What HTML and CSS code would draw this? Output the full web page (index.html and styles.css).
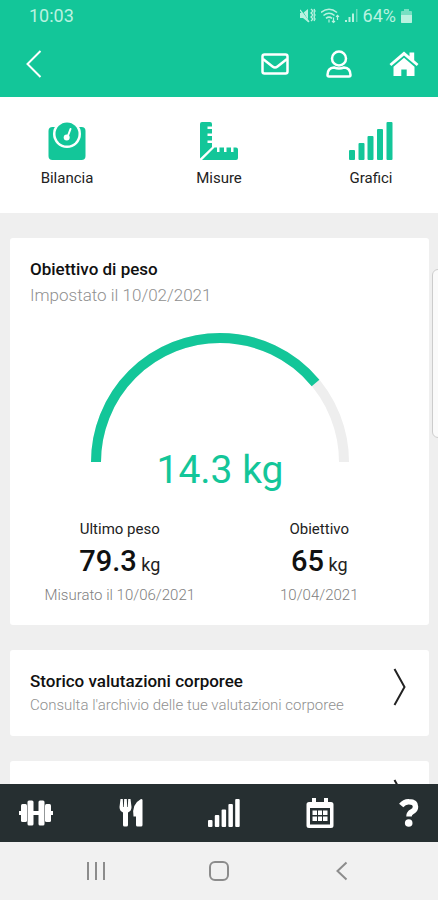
FILE: index.html
```
<!DOCTYPE html>
<html lang="it">
  <head>
    <meta charset="UTF-8" />
    <meta name="viewport" content="width=device-width, initial-scale=1.0" />
    <title>Obiettivo di peso</title>
    <link rel="stylesheet" href="styles.css">
  </head>
  <body>
    <header class="top">
      <div class="status-bar">
        <span class="clock">10:03</span>
        <div class="status-icons">
          <svg width="16" height="16" viewBox="0 0 16 16" fill="currentColor">
            <path d="M0 5h3l5-4v13l-5-4H0z" />
            <path d="M1 1l8 13" stroke="#13c699" stroke-width="1" />
            <path d="M0 2l9 12M11 1l2 2-2 2 2 2-2 2 2 2-2 2M14 1l1 2-1 2 1 2-1 2 1 2-1 2" fill="none" stroke="currentColor" stroke-width="1.3" />
          </svg>
          <svg width="19" height="16" viewBox="0 0 19 16" fill="none" stroke="currentColor" stroke-width="1.6">
            <path d="M0 4.500q8-6.500 16 0M2.500 7.500q5.500-4.500 11 0M5 10.300q3-2.400 6 0" />
            <path d="M8 11.500v3M12.500 9.500v5M11 13l1.500 1.500L14 13M16.500 12V7M15 8.800l1.500-1.500L18 8.800" stroke-width="1.2" />
          </svg>
          <svg width="13" height="16" viewBox="0 0 13 16" fill="currentColor">
            <path d="M0 12h2v2H0zM3.500 9h2v5h-2zM7 5.500h2V14H7z" />
            <path d="M11 1h1.500v13H11z" opacity=".5" />
          </svg>
          <span class="battery">64%</span>
          <svg width="11" height="16" viewBox="0 0 11 16" fill="currentColor">
            <path d="M3 1h5v2h2q1 0 1 1v10q0 1-1 1H1q-1 0-1-1V4q0-1 1-1h2z" opacity=".6" />
            <path d="M0 7h11v7q0 1-1 1H1q-1 0-1-1z" />
          </svg>
        </div>
      </div>
      <div class="toolbar">
        <button class="icon-btn back" aria-label="Indietro">
          <svg width="16" height="28" viewBox="0 0 16 28" fill="none" stroke="currentColor" stroke-width="2">
            <path d="M14.500 1L1.500 14l13 13" />
          </svg>
        </button>
        <button class="icon-btn" aria-label="Messaggi">
          <svg width="28" height="22" viewBox="0 0 28 22" fill="none" stroke="currentColor" stroke-width="2.5" stroke-linejoin="round">
            <rect x="1.5" y="1.5" width="25" height="19" rx="2" />
            <path d="M2 6l9.500 7.500q2.500 2 5 0L26 6" />
          </svg>
        </button>
        <button class="icon-btn" aria-label="Profilo">
          <svg width="26" height="28" viewBox="0 0 26 28" fill="none" stroke="currentColor" stroke-width="2.5" stroke-linejoin="round">
            <circle cx="13" cy="8.500" r="7" />
            <path d="M8 17.500q5 2 10 0 6.500.5 6.500 7.500 0 1.500-1.500 1.500H3q-1.500 0-1.500-1.500 0-7 6.500-7.500z" />
          </svg>
        </button>
        <button class="icon-btn" aria-label="Home">
          <svg width="30" height="26" viewBox="0 0 30 26" fill="currentColor">
            <path d="M15 6.800l10.500 9V25h-7.800v-6.500h-5.400V25H4.500v-9.200z" />
            <path d="M15 .5l5.500 4.700V1.500h4.700v7.800l4.300 3.600-1.800 2.200L15 4.400 2.300 15.100.5 12.900z" />
          </svg>
        </button>
      </div>
    </header>

    <nav class="tabs">
      <a class="tab" href="#bilancia">
        <svg width="38" height="38" viewBox="0 0 38 38" fill="currentColor">
          <rect x="0.5" y="5" width="37" height="33" rx="4" />
          <circle cx="19" cy="12" r="14" fill="#fff" />
          <circle cx="19" cy="12" r="11.500" />
          <path d="M22.500 7l-3 8" fill="none" stroke="#fff" stroke-width="2" stroke-linecap="round" />
          <circle cx="18.700" cy="15.500" r="3" fill="#fff" />
        </svg>
        <span>Bilancia</span>
      </a>
      <a class="tab" href="#misure">
        <svg width="38" height="38" viewBox="0 0 38 38" fill="currentColor">
          <path d="M2 0h8q2 0 2 2v2.500H7.500V7H12v4.500H7.500V14H12v4.500H7.500V21H12v4L0 36.500V2q0-2 2-2z" />
          <path d="M2 38l12.500-12.500H17V30h2.500v-4.500H24V30h2.500v-4.500H31V30h2.500v-4.500H36q2 0 2 2V36q0 2-2 2z" />
        </svg>
        <span>Misure</span>
      </a>
      <a class="tab" href="#grafici">
        <svg width="44" height="38" viewBox="0 0 44 38" fill="currentColor">
          <rect x="0" y="28" width="6" height="10" rx="1" />
          <rect x="9.500" y="21" width="6" height="17" rx="1" />
          <rect x="18.500" y="14" width="6" height="24" rx="1" />
          <rect x="28" y="7" width="6" height="31" rx="1" />
          <rect x="37.500" y="0" width="6" height="38" rx="1" />
        </svg>
        <span>Grafici</span>
      </a>
    </nav>

    <main class="content">
      <section class="card goal">
        <div class="goal-head">
          <h2>Obiettivo di peso</h2>
          <p class="goal-date">Impostato il 10/02/2021</p>
        </div>
        <svg class="gauge" viewBox="0 0 258 164">
          <path class="gauge-track" d="M5 129a124 124 0 0 1 248 0" />
          <path class="gauge-value" pathLength="100" stroke-dasharray="78 100" d="M5 129a124 124 0 0 1 248 0" />
          <text class="gauge-text" x="129" y="150">14.3 kg</text>
        </svg>
        <div class="weights">
          <div class="weight">
            <span class="weight-label">Ultimo peso</span>
            <span class="weight-value"><strong>79.3</strong> kg</span>
            <span class="weight-date">Misurato il 10/06/2021</span>
          </div>
          <div class="weight">
            <span class="weight-label">Obiettivo</span>
            <span class="weight-value"><strong>65</strong> kg</span>
            <span class="weight-date">10/04/2021</span>
          </div>
        </div>
      </section>

      <a class="card link-card" href="#storico">
        <div>
          <h2>Storico valutazioni corporee</h2>
          <p class="link-text">Consulta l'archivio delle tue valutazioni corporee</p>
        </div>
        <svg width="13" height="38" viewBox="0 0 13 38" fill="none" stroke="currentColor" stroke-width="2">
          <path d="M1.500 1l10 18-10 18" />
        </svg>
      </a>

      <a class="card link-card" href="#altro" aria-label="Altro">
        <div></div>
        <svg width="13" height="38" viewBox="0 0 13 38" fill="none" stroke="currentColor" stroke-width="2">
          <path d="M1.500 1l10 18-10 18" />
        </svg>
      </a>
    </main>

    <nav class="bottom-nav">
      <a href="#allenamento" aria-label="Allenamento">
        <svg width="34" height="28" viewBox="0 0 34 28" fill="currentColor">
          <path d="M14 12h6v4h-6zM0 12h2.500v4H0zM31.500 12H34v4h-2.500z" />
          <rect x="2" y="5" width="6" height="18" rx="1.5" />
          <rect x="8.500" y="1.500" width="6" height="25" rx="1.5" />
          <rect x="19.500" y="1.500" width="6" height="25" rx="1.5" />
          <rect x="26" y="5" width="6" height="18" rx="1.5" />
        </svg>
      </a>
      <a href="#dieta" aria-label="Dieta">
        <svg width="24" height="28" viewBox="0 0 24 28" fill="currentColor">
          <path d="M1.500 0h2.300l.4 8h.6l.4-8h2.600l.4 8h.6l.4-8h2.300l1 8q0 4-3.500 5.500V26q0 1.500-1.500 1.500H5.500Q4 27.500 4 26V13.500Q.5 12 .5 8z" />
          <path d="M23.500 1v25q0 1.500-1.500 1.500h-3.500Q17 27.500 17 26v-8.500h-2.500Q12.500 5 22 0q1.500 0 1.500 1z" />
        </svg>
      </a>
      <a href="#grafici" aria-label="Grafici">
        <svg width="32" height="28" viewBox="0 0 32 28" fill="currentColor">
          <rect x="0" y="21" width="4.500" height="7" rx="1" />
          <rect x="6.800" y="16" width="4.500" height="12" rx="1" />
          <rect x="13.600" y="10.500" width="4.500" height="17.500" rx="1" />
          <rect x="20.400" y="5" width="4.500" height="23" rx="1" />
          <rect x="27.200" y="0" width="4.500" height="28" rx="1" />
        </svg>
      </a>
      <a href="#calendario" aria-label="Calendario">
        <svg width="28" height="30" viewBox="0 0 28 30" fill="currentColor">
          <path fill-rule="evenodd" d="M6 0h4v4h8V0h4v4h3q2.500 0 2.500 2.500v21Q27.500 30 25 30H3Q.5 30 .5 27.500v-21Q.5 4 3 4h3zM4 10v16.500h20V10z" />
          <path d="M6.500 12.500h4.500v4.500H6.500zM12 12.500h4v4.500h-4zM17 12.500h4.500v4.500H17zM6.500 18.500h4.500V23H6.500zM12 18.500h4V23h-4zM17 18.500h4.500V23H17z" />
        </svg>
      </a>
      <a href="#aiuto" aria-label="Aiuto">
        <svg width="20" height="28" viewBox="0 0 20 28" fill="none" stroke="currentColor">
          <path d="M2.200 6.500Q5.500 2.500 10 2.800q6.500.2 6.500 4.900 0 3.300-3.500 5.100-3 1.500-3 4.700" stroke-width="5.5" />
          <circle cx="9.700" cy="24" r="3.800" fill="currentColor" stroke="none" />
        </svg>
      </a>
    </nav>

    <footer class="system-nav">
      <button class="icon-btn" aria-label="App recenti">
        <svg width="20" height="20" viewBox="0 0 20 20" fill="none" stroke="currentColor" stroke-width="2">
          <path d="M2 1v18M10 1v18M18 1v18" />
        </svg>
      </button>
      <button class="icon-btn" aria-label="Schermata Home">
        <svg width="20" height="20" viewBox="0 0 20 20" fill="none" stroke="currentColor" stroke-width="2">
          <rect x="1" y="1" width="18" height="18" rx="5" />
        </svg>
      </button>
      <button class="icon-btn" aria-label="Torna indietro">
        <svg width="20" height="20" viewBox="0 0 20 20" fill="none" stroke="currentColor" stroke-width="2">
          <path d="M14.500 1.500L5.500 10l9 8.500" />
        </svg>
      </button>
    </footer>

    <!-- edge panel handle -->
    <div class="edge-handle"></div>
  </body>
</html>
```
FILE: styles.css
```
* {
  box-sizing: border-box;
}
body {
  font-family: Roboto, sans-serif;
  background-color: #efefef;
  color: #222222;
  margin: 0;
  display: flex;
  flex-direction: column;
  height: 100vh;
  overflow: hidden;
}
svg {
  display: block;
  flex-shrink: 0;
}
h2,
p {
  margin: 0;
}
h2 {
  font-size: 17px;
  line-height: 24px;
  font-weight: 500;
  color: #111111;
}
a {
  color: inherit;
  text-decoration: none;
}
.icon-btn {
  background: none;
  border: none;
  padding: 0;
  color: inherit;
  cursor: pointer;
}

/* header */
.top {
  background: #13c699;
  color: #ffffff;
}
.status-bar {
  display: flex;
  justify-content: space-between;
  align-items: center;
  height: 31px;
  padding: 0 26px 0 29px;
  font-size: 18px;
  color: #b9f2e0;
}
.status-icons {
  display: flex;
  align-items: center;
  gap: 5px;
}
.toolbar {
  display: flex;
  align-items: center;
  gap: 37px;
  height: 66px;
  padding: 0 19px 0 26px;
}
.back {
  margin-right: auto;
}

/* tabs */
.tabs {
  display: flex;
  justify-content: space-between;
  background: #ffffff;
  padding: 25px 31px 23px;
}
.tab {
  display: flex;
  flex-direction: column;
  align-items: center;
  gap: 6px;
  width: 72px;
  font-size: 15px;
  line-height: 24px;
}
.tab svg {
  color: #13c699;
}

/* cards */
.content {
  flex: 1;
  min-height: 0;
  overflow: hidden;
  padding: 25px 9px 0 10px;
}
.card {
  background: #ffffff;
  border-radius: 3px;
  margin-bottom: 25px;
}
.goal {
  padding: 19px 10px 20px;
}
.goal-head {
  padding: 0 10px;
}
.goal-date {
  font-size: 17px;
  line-height: 28px;
  color: #909090;
  font-weight: 300;
}
.gauge {
  width: 258px;
  margin: 24px auto 0;
}
.gauge-track,
.gauge-value {
  fill: none;
  stroke: #eeeeee;
  stroke-width: 10;
}
.gauge-value {
  stroke: #13c699;
}
.gauge-text {
  fill: #13c699;
  font-size: 39px;
  text-anchor: middle;
}
.weights {
  display: grid;
  grid-template-columns: 1fr 1fr;
  margin-top: 22px;
}
.weight {
  display: flex;
  flex-direction: column;
  align-items: center;
}
.weight-label {
  font-size: 15px;
  line-height: 20px;
}
.weight-value {
  margin-top: 2px;
  font-size: 18px;
  line-height: 40px;
}
.weight-value strong {
  font-size: 29px;
  font-weight: 500;
  color: #111111;
}
.weight-date {
  font-size: 15px;
  line-height: 20px;
  color: #808080;
  font-weight: 300;
}
.link-card {
  display: flex;
  justify-content: space-between;
  align-items: center;
  padding: 18px 23px 18px 20px;
  min-height: 86px;
}
.link-card svg {
  margin-bottom: 12px;
  color: #222222;
}
.link-text {
  font-size: 15px;
  line-height: 24px;
  color: #909090;
  font-weight: 300;
}

/* bottom bars */
.bottom-nav {
  display: flex;
  justify-content: space-between;
  align-items: center;
  height: 58px;
  padding: 0 19px;
  background: #262f31;
  color: #ffffff;
}
.system-nav {
  display: flex;
  justify-content: center;
  align-items: center;
  gap: 103px;
  height: 58px;
  background: #f1f1f1;
  color: #8c8c8c;
}
.edge-handle {
  position: fixed;
  top: 269px;
  right: -8px;
  width: 14px;
  height: 169px;
  background: #fafafa;
  border: 1px solid #cccccc;
  border-radius: 6px;
}
```
